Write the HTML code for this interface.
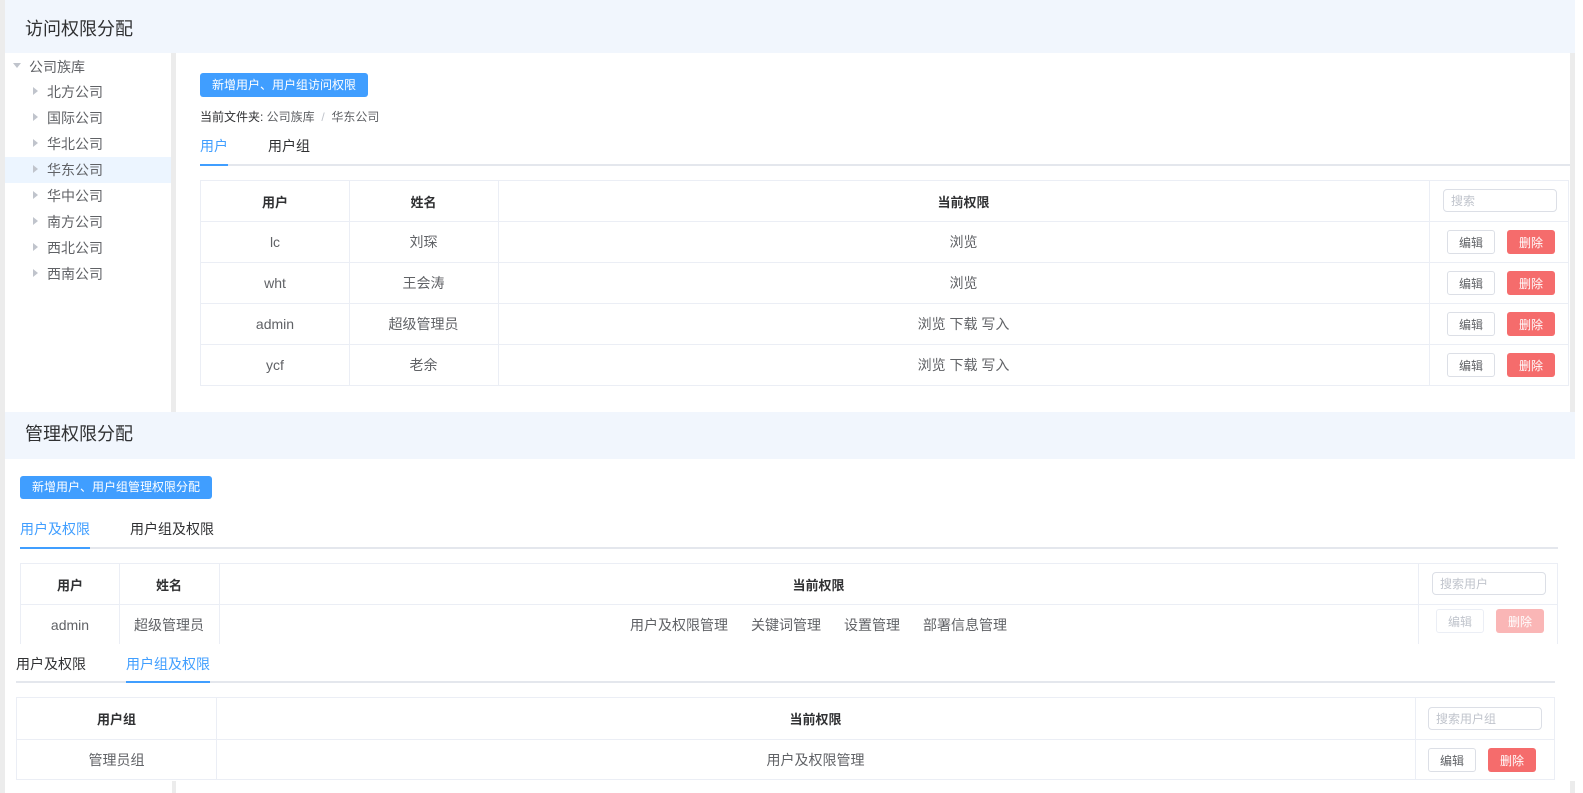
<!DOCTYPE html>
<html><head><meta charset="utf-8"><style>
*{margin:0;padding:0;box-sizing:border-box}
body{width:1583px;height:793px;background:#fff;position:relative;overflow:hidden;font-family:"Liberation Sans","Noto Sans CJK SC",sans-serif;color:#606266}
.a{position:absolute}
.hdr{background:#f1f6fd;left:5px;width:1570px}
.title{font-size:18px;color:#303133;left:25px}
.btn{background:#409eff;color:#fff;font-size:12px;border-radius:3px;text-align:center}
.tab{font-size:14px;color:#303133}
.tab.on{color:#409eff}
.line{height:2px;background:#e4e7ed}
.bar{height:2px;background:#409eff}
.cell{position:absolute;display:flex;align-items:center;justify-content:center;font-size:14px;color:#606266}
.th{color:#303133;font-weight:bold;font-size:13px}
.tbl{position:absolute;border:1px solid #ebeef5;overflow:hidden}
.hl{position:absolute;left:0;right:0;height:1px;background:#ebeef5}
.vl{position:absolute;top:0;bottom:0;width:1px;background:#ebeef5}
.inp{position:absolute;border:1px solid #dcdfe6;border-radius:4px;font-size:12px;color:#c0c4cc;padding-left:7px;display:flex;align-items:center}
.eb{position:absolute;border:1px solid #dcdfe6;border-radius:3px;font-size:12px;color:#606266;display:flex;align-items:center;justify-content:center;width:48px;height:24px;background:#fff}
.db{position:absolute;border-radius:3px;font-size:12px;color:#fff;background:#f56c6c;display:flex;align-items:center;justify-content:center;width:48px;height:24px}
.tree{font-size:14px;color:#606266;left:47px}
.car{width:0;height:0;border-top:4px solid transparent;border-bottom:4px solid transparent;border-left:5px solid #c0c4cc;left:33px}
.g{margin-left:23px}
</style></head><body>
<div class="a" style="left:0;top:0;width:5px;height:793px;background:#ececec"></div>
<div class="a hdr" style="top:0;height:53px"></div>
<div class="a title" style="top:15px">访问权限分配</div>
<div class="a" style="left:171px;top:53px;width:5px;height:359px;background:#ececec"></div>
<div class="a" style="left:1570px;top:53px;width:5px;height:359px;background:#ececec"></div>
<div class="a" style="left:13px;top:63px;width:0;height:0;border-left:4px solid transparent;border-right:4px solid transparent;border-top:5px solid #c0c4cc"></div>
<div class="a tree" style="left:29px;top:57px">公司族库</div>
<div class="a" style="left:5px;top:157px;width:166px;height:26px;background:#ecf5ff"></div>
<div class="a car" style="top:87px"></div><div class="a tree" style="top:82px">北方公司</div>
<div class="a car" style="top:113px"></div><div class="a tree" style="top:108px">国际公司</div>
<div class="a car" style="top:139px"></div><div class="a tree" style="top:134px">华北公司</div>
<div class="a car" style="top:165px"></div><div class="a tree" style="top:160px">华东公司</div>
<div class="a car" style="top:191px"></div><div class="a tree" style="top:186px">华中公司</div>
<div class="a car" style="top:217px"></div><div class="a tree" style="top:212px">南方公司</div>
<div class="a car" style="top:243px"></div><div class="a tree" style="top:238px">西北公司</div>
<div class="a car" style="top:269px"></div><div class="a tree" style="top:264px">西南公司</div>

<div class="a btn" style="left:200px;top:73px;width:168px;height:24px;line-height:24px">新增用户、用户组访问权限</div>
<div class="a" style="left:200px;top:108px;font-size:12px;color:#606266"><span style="color:#303133">当前文件夹:</span> 公司族库 &nbsp;<span style="color:#c0c4cc">/</span>&nbsp; 华东公司</div>
<div class="a tab on" style="left:200px;top:136px">用户</div>
<div class="a tab" style="left:268px;top:136px">用户组</div>
<div class="a line" style="left:200px;top:164px;width:1370px"></div>
<div class="a bar" style="left:200px;top:164px;width:28px"></div>

<div class="tbl" style="left:200px;top:180px;width:1369px;height:206px">
<div class="hl" style="top:40px"></div><div class="hl" style="top:81px"></div><div class="hl" style="top:122px"></div><div class="hl" style="top:163px"></div>
<div class="vl" style="left:148px"></div><div class="vl" style="left:297px"></div><div class="vl" style="left:1228px"></div>
<div class="cell th" style="left:0;width:148px;top:0;height:40px">用户</div>
<div class="cell th" style="left:148px;width:149px;top:0;height:40px">姓名</div>
<div class="cell th" style="left:297px;width:931px;top:0;height:40px">当前权限</div>
<div class="inp" style="left:1242px;top:8px;width:114px;height:23px">搜索</div>
<div class="cell" style="left:0;width:148px;top:41px;height:40px">lc</div><div class="cell" style="left:148px;width:149px;top:41px;height:40px">刘琛</div><div class="cell" style="left:297px;width:931px;top:41px;height:40px">浏览</div>
<div class="cell" style="left:0;width:148px;top:82px;height:40px">wht</div><div class="cell" style="left:148px;width:149px;top:82px;height:40px">王会涛</div><div class="cell" style="left:297px;width:931px;top:82px;height:40px">浏览</div>
<div class="cell" style="left:0;width:148px;top:123px;height:40px">admin</div><div class="cell" style="left:148px;width:149px;top:123px;height:40px">超级管理员</div><div class="cell" style="left:297px;width:931px;top:123px;height:40px">浏览 下载 写入</div>
<div class="cell" style="left:0;width:148px;top:164px;height:40px">ycf</div><div class="cell" style="left:148px;width:149px;top:164px;height:40px">老余</div><div class="cell" style="left:297px;width:931px;top:164px;height:40px">浏览 下载 写入</div>
<div class="eb" style="left:1246px;top:49px">编辑</div><div class="db" style="left:1306px;top:49px">删除</div>
<div class="eb" style="left:1246px;top:90px">编辑</div><div class="db" style="left:1306px;top:90px">删除</div>
<div class="eb" style="left:1246px;top:131px">编辑</div><div class="db" style="left:1306px;top:131px">删除</div>
<div class="eb" style="left:1246px;top:172px">编辑</div><div class="db" style="left:1306px;top:172px">删除</div>
</div>

<div class="a hdr" style="top:412px;height:47px"></div>
<div class="a title" style="top:420px">管理权限分配</div>
<div class="a btn" style="left:20px;top:476px;width:192px;height:23px;line-height:23px">新增用户、用户组管理权限分配</div>
<div class="a tab on" style="left:20px;top:519px">用户及权限</div>
<div class="a tab" style="left:130px;top:519px">用户组及权限</div>
<div class="a line" style="left:20px;top:547px;width:1538px"></div>
<div class="a bar" style="left:20px;top:547px;width:70px"></div>
<div class="tbl" style="left:20px;top:563px;width:1538px;height:81px;border-bottom:none">
<div class="hl" style="top:40px"></div>
<div class="vl" style="left:98px"></div><div class="vl" style="left:198px"></div><div class="vl" style="left:1397px"></div>
<div class="cell th" style="left:0;width:98px;top:0;height:40px">用户</div>
<div class="cell th" style="left:98px;width:100px;top:0;height:40px">姓名</div>
<div class="cell th" style="left:198px;width:1199px;top:0;height:40px">当前权限</div>
<div class="inp" style="left:1411px;top:8px;width:114px;height:23px">搜索用户</div>
<div class="cell" style="left:0;width:98px;top:41px;height:40px">admin</div>
<div class="cell" style="left:98px;width:100px;top:41px;height:40px">超级管理员</div>
<div class="cell" style="left:198px;width:1199px;top:41px;height:40px"><span>用户及权限管理</span><span class="g">关键词管理</span><span class="g">设置管理</span><span class="g">部署信息管理</span></div>
<div class="eb" style="left:1415px;top:45px;color:#c0c4cc;border-color:#ebeef5">编辑</div><div class="db" style="left:1475px;top:45px;background:#fab6b6">删除</div>
</div>

<div class="a tab" style="left:16px;top:654px">用户及权限</div>
<div class="a tab on" style="left:126px;top:654px">用户组及权限</div>
<div class="a line" style="left:16px;top:681px;width:1539px"></div>
<div class="a bar" style="left:126px;top:681px;width:84px"></div>
<div class="tbl" style="left:16px;top:697px;width:1539px;height:83px">
<div class="hl" style="top:41px"></div>
<div class="vl" style="left:199px"></div><div class="vl" style="left:1398px"></div>
<div class="cell th" style="left:0;width:199px;top:0;height:41px">用户组</div>
<div class="cell th" style="left:199px;width:1199px;top:0;height:41px">当前权限</div>
<div class="inp" style="left:1411px;top:9px;width:114px;height:23px">搜索用户组</div>
<div class="cell" style="left:0;width:199px;top:42px;height:40px">管理员组</div>
<div class="cell" style="left:199px;width:1199px;top:42px;height:40px">用户及权限管理</div>
<div class="eb" style="left:1411px;top:50px">编辑</div><div class="db" style="left:1471px;top:50px">删除</div>
</div>
<div class="a" style="left:172px;top:781px;width:4px;height:12px;background:#ececec"></div>
<div class="a" style="left:1570px;top:781px;width:5px;height:12px;background:#ececec"></div>
</body></html>
